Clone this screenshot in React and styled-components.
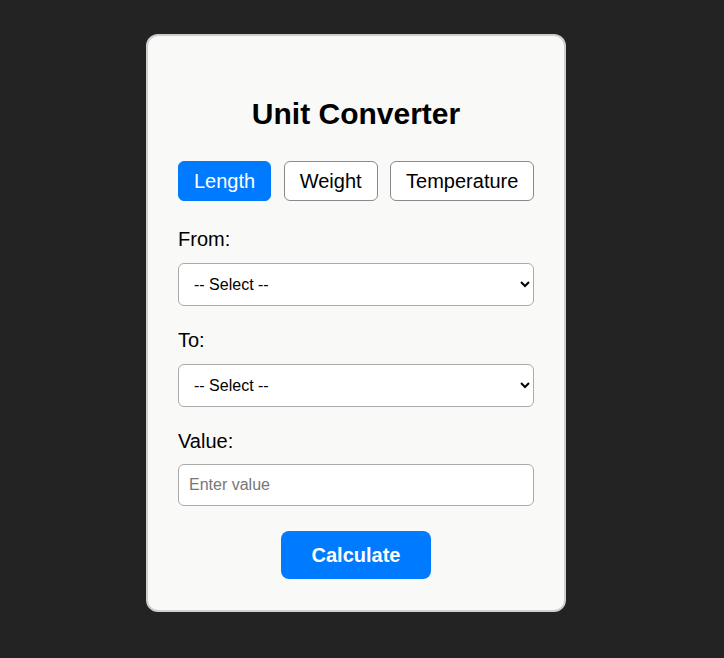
import React, { useState } from "react";
import styled, { createGlobalStyle } from "styled-components";

const Global = createGlobalStyle`
  html, body { margin: 0; padding: 0; background: #232323; }
  body { font-family: "Liberation Sans", Arial, sans-serif; }
  * { box-sizing: border-box; }
`;

const Page = styled.div`
  min-height: 658px;
  display: flex;
  justify-content: center;
  align-items: flex-start;
  padding: 34px 12px 0 0;
`;

const Card = styled.div`
  width: 420px;
  background: #f9f9f7;
  border: 2px solid #cfcfcf;
  border-radius: 12px;
  padding: 30px 30px 31px;
  display: flex;
  flex-direction: column;
`;

const Title = styled.h1`
  margin: 31px 0 30px;
  font-size: 30px;
  font-weight: bold;
  text-align: center;
  color: #000;
  line-height: normal;
`;

const Tabs = styled.div`
  display: flex;
  gap: 12.5px;
  margin-bottom: 27px;
`;

const Tab = styled.button`
  font-family: "Liberation Sans", Arial, sans-serif;
  font-size: 20px;
  line-height: 22px;
  padding: 8px 15px;
  border-radius: 6px;
  border: 1px solid ${(p) => (p.$active ? "#007bff" : "#8a8a8a")};
  background: ${(p) => (p.$active ? "#007bff" : "#ffffff")};
  color: ${(p) => (p.$active ? "#ffffff" : "#000000")};
  cursor: pointer;
`;

const Field = styled.div`
  display: flex;
  flex-direction: column;
  margin-bottom: ${(p) => p.$mb}px;
`;

const Label = styled.label`
  font-size: 20px;
  line-height: 23px;
  color: #000;
  margin-bottom: ${(p) => p.$mb}px;
`;

const Select = styled.select`
  width: 100%;
  height: 43px;
  padding: 0 11px;
  font-family: "Liberation Sans", Arial, sans-serif;
  font-size: 16px;
  color: #000;
  background: #fff;
  border: 1px solid #aaaaaa;
  border-radius: 6px;
`;

const Input = styled.input`
  width: 100%;
  height: 42px;
  padding: 0 10px;
  font-family: "Liberation Sans", Arial, sans-serif;
  font-size: 16px;
  color: #000;
  background: #fff;
  border: 1px solid #aaaaaa;
  border-radius: 6px;
  &::placeholder { color: #777; }
`;

const Calc = styled.button`
  align-self: center;
  width: 150px;
  height: 48px;
  margin-top: 25px;
  font-family: "Liberation Sans", Arial, sans-serif;
  font-size: 20px;
  font-weight: bold;
  color: #fff;
  background: #007bff;
  border: none;
  border-radius: 8px;
  cursor: pointer;
`;

export default function App() {
  const [tab, setTab] = useState("Length");
  const tabs = ["Length", "Weight", "Temperature"];
  return (
    <>
      <Global />
      <Page>
        <Card>
          <Title>Unit Converter</Title>
          <Tabs>
            {tabs.map((t) => (
              <Tab key={t} $active={tab === t} onClick={() => setTab(t)}>
                {t}
              </Tab>
            ))}
          </Tabs>
          <Field $mb={23}>
            <Label $mb={12}>From:</Label>
            <Select defaultValue="">
              <option value="">-- Select --</option>
            </Select>
          </Field>
          <Field $mb={23}>
            <Label $mb={12}>To:</Label>
            <Select defaultValue="">
              <option value="">-- Select --</option>
            </Select>
          </Field>
          <Field $mb={0}>
            <Label $mb={11}>Value:</Label>
            <Input placeholder="Enter value" />
          </Field>
          <Calc>Calculate</Calc>
        </Card>
      </Page>
    </>
  );
}
